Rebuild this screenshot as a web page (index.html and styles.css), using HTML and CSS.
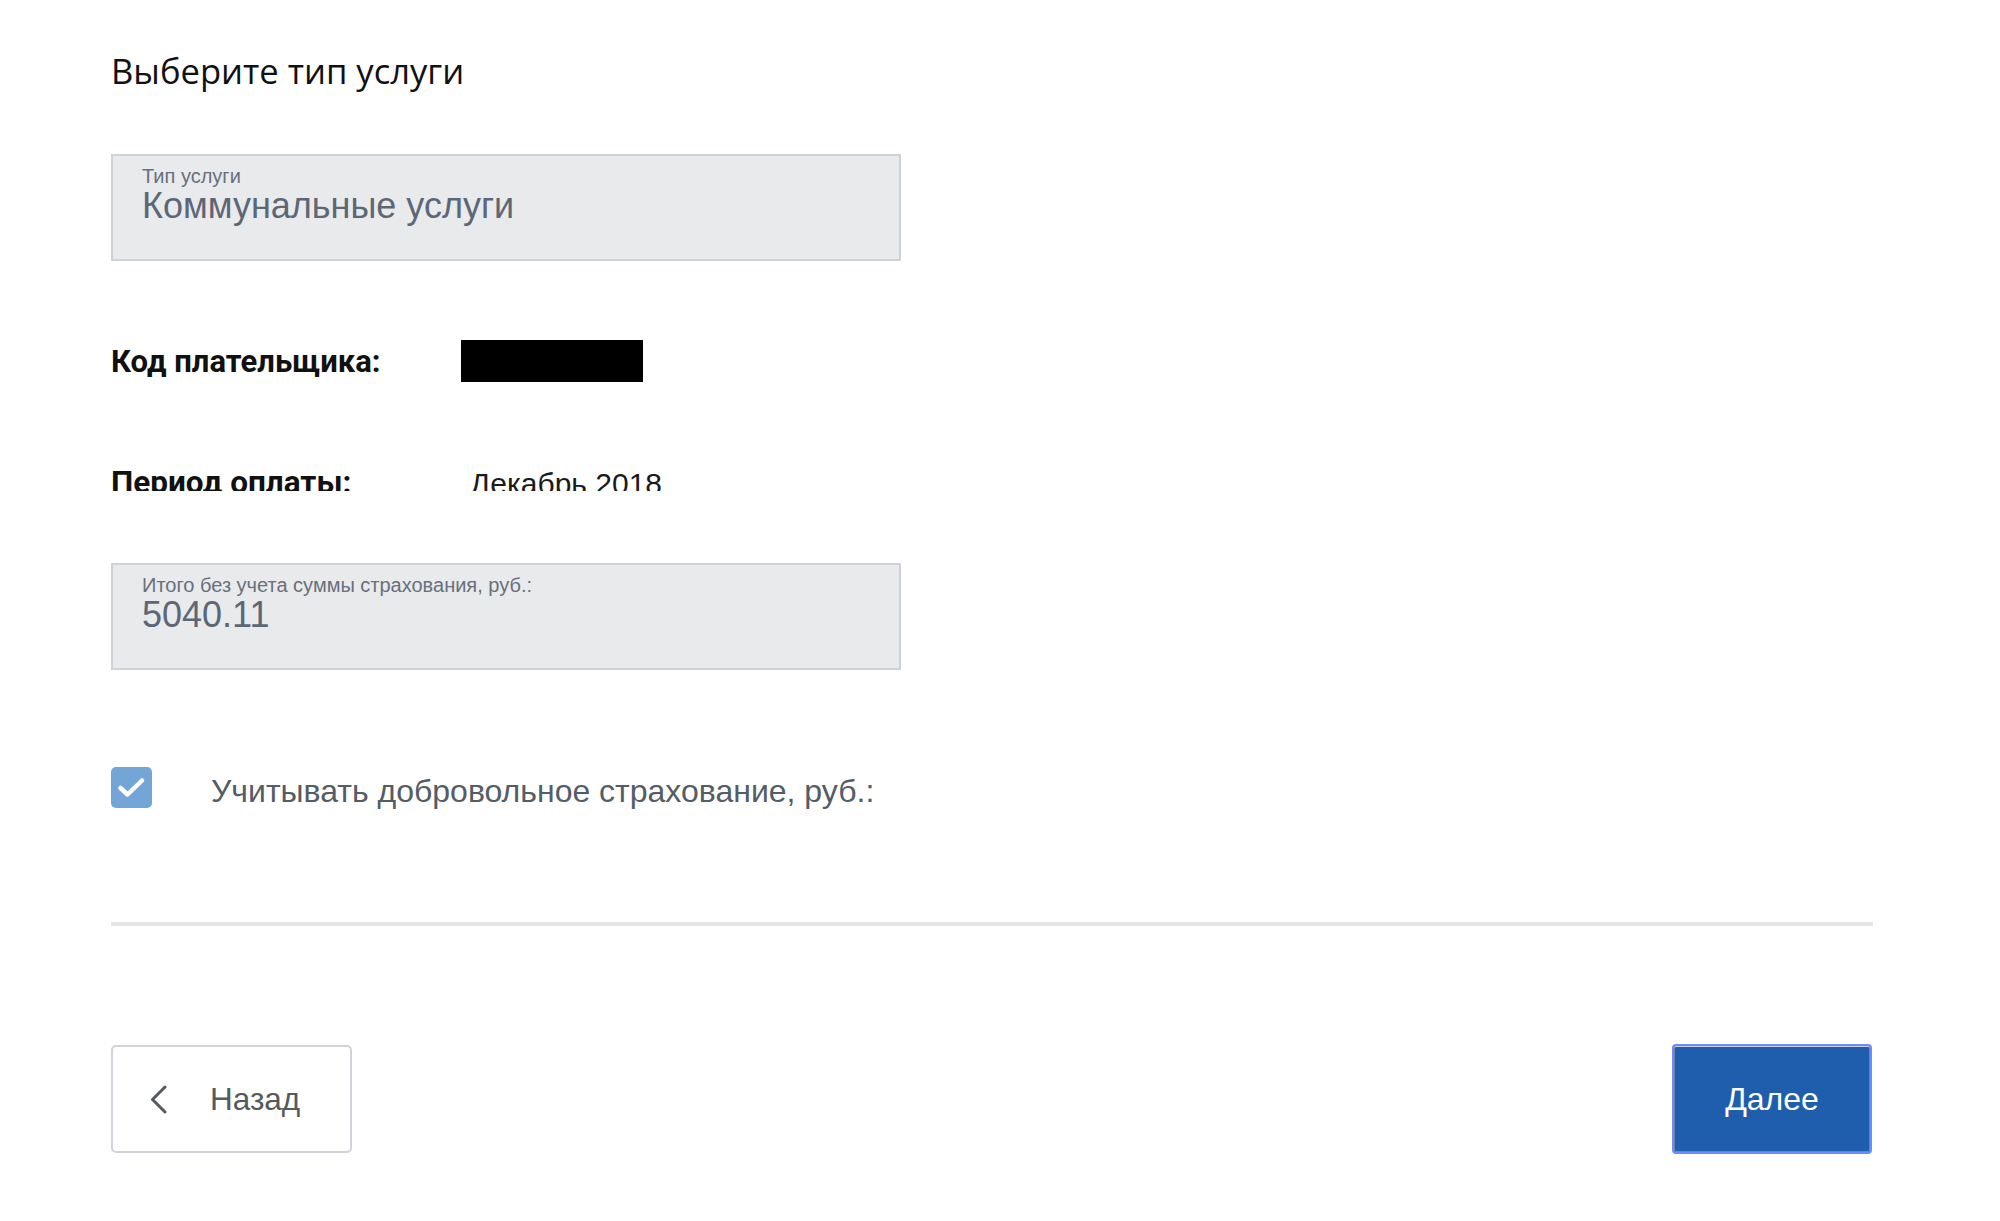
FILE: index.html
```html
<!DOCTYPE html>
<html lang="ru">
<head>
<meta charset="utf-8">
<title>Выберите тип услуги</title>
<link rel="stylesheet" href="styles.css">
</head>
<body>
<div class="page">
  <h1 class="title">Выберите тип услуги</h1>

  <div class="field">
    <div class="field-label">Тип услуги</div>
    <div class="field-value">Коммунальные услуги</div>
  </div>

  <div class="info-row code-row">
    <div class="info-label">Код плательщика:</div>
    <div class="redacted"></div>
  </div>

  <div class="info-row period-row">
    <div class="info-label">Период оплаты:</div>
    <div class="info-value">Декабрь 2018</div>
  </div>

  <div class="field field-total">
    <div class="field-label">Итого без учета суммы страхования, руб.:</div>
    <div class="field-value">5040.11</div>
  </div>

  <div class="check-row">
    <span class="checkbox">
      <svg width="41" height="41" viewBox="0 0 41 41" aria-hidden="true">
        <rect x="0" y="0" width="41" height="41" rx="5" ry="5" fill="#73a5d6"/>
        <polyline points="9.5,21 16.5,27.5 31,13.5" fill="none" stroke="#ffffff" stroke-width="4.5" stroke-linecap="round" stroke-linejoin="round"/>
      </svg>
    </span>
    <span class="check-label">Учитывать добровольное страхование, руб.:</span>
  </div>

  <div class="divider"></div>

  <div class="actions">
    <button class="btn btn-back" type="button">
      <svg class="chevron" width="17" height="29" viewBox="0 0 17 29" aria-hidden="true">
        <polyline points="15,2 2.5,14.5 15,27" fill="none" stroke="#555a60" stroke-width="3" stroke-linecap="round" stroke-linejoin="round"/>
      </svg>
      <span>Назад</span>
    </button>
    <button class="btn btn-next" type="button">Далее</button>
  </div>
</div>
</body>
</html>
```

FILE: styles.css
```css
html, body {
  margin: 0;
  padding: 0;
  background: #ffffff;
}

.page {
  width: 1762px;
  padding-left: 111px;
  font-family: "Liberation Sans", Arial, sans-serif;
}

.title {
  margin: 48px 0 0 0;
  font-family: "Open Sans", sans-serif;
  font-weight: 400;
  font-size: 34.6px;
  line-height: 46px;
  color: #111111;
}

.field {
  box-sizing: border-box;
  width: 790px;
  height: 107px;
  margin-top: 60px;
  padding: 9px 0 0 29px;
  background: #e9eaec;
  border: 2px solid #cfd2d6;
}

.field-label {
  font-size: 20px;
  line-height: 22px;
  color: #67707c;
}

.field-value {
  margin-top: 0.5px;
  font-size: 36px;
  line-height: 36px;
  color: #5c6776;
}

.info-row {
  display: flex;
  align-items: flex-start;
}

.info-label {
  width: 350px;
  flex: none;
  font-family: Roboto, sans-serif;
  font-weight: 700;
  font-size: 31px;
  color: #111111;
}

.code-row {
  margin-top: 79px;
  height: 42px;
}

.code-row .info-label {
  line-height: 44px;
}

.redacted {
  width: 182px;
  height: 42px;
  background: #000000;
}

.period-row {
  margin-top: 78px;
  height: 31px;
  overflow: hidden;
}

.period-row .info-label {
  line-height: 45px;
  font-size: 31.5px;
}

.info-value {
  margin-left: 9px;
  font-size: 30px;
  line-height: 47px;
  color: #1a1a1a;
}

.field-total {
  margin-top: 72px;
}

.check-row {
  display: flex;
  align-items: flex-start;
  margin-top: 97px;
}

.checkbox {
  display: block;
  width: 41px;
  height: 41px;
  flex: none;
}

.checkbox svg {
  display: block;
}

.check-label {
  margin: 4px 0 0 59px;
  font-size: 32px;
  line-height: 40px;
  color: #545c66;
}

.divider {
  width: 1762px;
  height: 4px;
  margin-top: 111px;
  background: #e4e4e4;
}

.actions {
  display: flex;
  justify-content: space-between;
  align-items: center;
  width: 1762px;
  margin-top: 118px;
}

.btn {
  box-sizing: border-box;
  font-family: "Liberation Sans", Arial, sans-serif;
  font-size: 32px;
  cursor: pointer;
  padding: 0;
  margin: 0;
}

.btn-back {
  display: flex;
  align-items: center;
  width: 241px;
  height: 108px;
  padding-left: 37px;
  background: #ffffff;
  border: 2px solid #d0d3d7;
  border-radius: 5px;
  color: #555a60;
  font-size: 31.5px;
}

.chevron {
  display: block;
  flex: none;
}

.btn-back span {
  margin-left: 43px;
}

.btn-next {
  width: 200px;
  height: 110px;
  margin-right: 1px;
  background: #1e5ead;
  border: 2px solid #6a8cff;
  border-radius: 4px;
  box-shadow: inset 0 1px 0 #c9d0dc, inset 0 -1px 0 #7c8491, inset 1px 0 0 #6d7f9c, inset -1px 0 0 #6d7f9c;
  color: #ffffff;
  text-align: center;
}
```
